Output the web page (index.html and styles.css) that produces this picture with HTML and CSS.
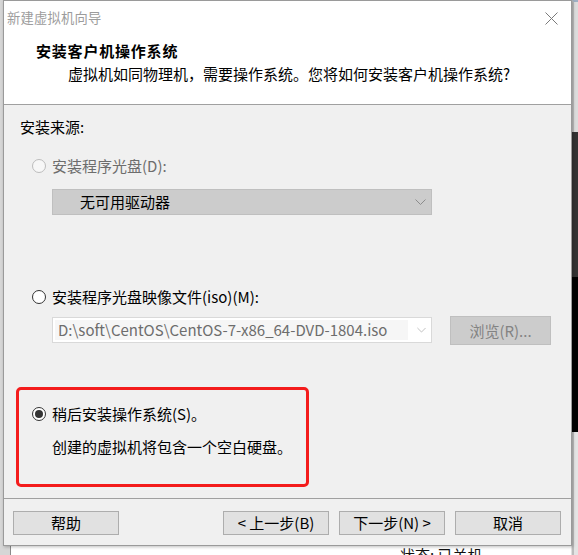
FILE: index.html
```html
<!DOCTYPE html>
<html lang="zh-CN">
<head>
<meta charset="utf-8">
<title>新建虚拟机向导</title>
<link rel="stylesheet" href="styles.css">
</head>
<body>
<div class="desktop">
  <div class="bg-left"></div>
  <div class="bg-right">
    <div class="seg seg-light"></div>
    <div class="seg seg-dark"></div>
    <div class="seg seg-black"></div>
    <div class="seg seg-light2"></div>
  </div>
  <div class="bg-bottom"><span class="status">状态: 已关机</span></div>

  <div class="dialog">
    <div class="titlebar">
      <span class="title">新建虚拟机向导</span>
      <svg class="close" width="13" height="13" viewBox="0 0 13 13"><path d="M0.5 0.5 L12.5 12.5 M12.5 0.5 L0.5 12.5" stroke="#7a7a7a" stroke-width="1" fill="none"/></svg>
    </div>
    <div class="header">
      <div class="h-title">安装客户机操作系统</div>
      <div class="h-sub">虚拟机如同物理机，需要操作系统。您将如何安装客户机操作系统?</div>
    </div>
    <div class="content">
      <div class="section-label">安装来源:</div>
      <div class="radio-row row-disc is-disabled"><span class="radio"></span><span>安装程序光盘(D):</span></div>
      <div class="combo combo-disabled">
        <span class="combo-text">无可用驱动器</span>
        <svg class="chev" width="11" height="6" viewBox="0 0 11 6"><path d="M0.5 0.5 L5.5 5.5 L10.5 0.5" stroke="#8c8c8c" stroke-width="1" fill="none"/></svg>
      </div>
      <div class="radio-row row-iso"><span class="radio"></span><span>安装程序光盘映像文件(iso)(M):</span></div>
      <div class="iso-row">
        <div class="combo combo-iso">
          <span class="edit">D:\soft\CentOS\CentOS-7-x86_64-DVD-1804.iso</span>
          <svg class="chev" width="11" height="6" viewBox="0 0 11 6"><path d="M0.5 0.5 L5.5 5.5 L10.5 0.5" stroke="#b4b4b4" stroke-width="1" fill="none"/></svg>
        </div>
        <div class="browse">浏览(R)...</div>
      </div>
      <div class="later-box">
        <div class="radio-row"><span class="radio checked"></span><span>稍后安装操作系统(S)。</span></div>
        <div class="later-desc">创建的虚拟机将包含一个空白硬盘。</div>
      </div>
    </div>
    <div class="footer">
      <div class="btn">帮助</div>
      <div class="spacer"></div>
      <div class="btn">&lt; 上一步(B)</div>
      <div class="btn">下一步(N) &gt;</div>
      <div class="btn">取消</div>
    </div>
  </div>
</div>
</body>
</html>
```
FILE: styles.css
```css
* { box-sizing: border-box; }
html, body { margin: 0; padding: 0; }
body {
  width: 578px;
  height: 555px;
  overflow: hidden;
  background: #ffffff;
  font-family: "Noto Sans CJK SC", "Noto Sans", sans-serif;
  font-size: 15px;
  color: #000;
}
.desktop {
  position: relative;
  width: 578px;
  height: 555px;
  overflow: hidden;
  background: #ffffff;
}
.bg-left {
  position: absolute;
  left: 0; top: 0;
  width: 11px; height: 555px;
  background: #d6d6d6;
  border-right: 1px solid #8a8a8a;
}
.bg-right {
  position: absolute;
  left: 572px; top: 0;
  width: 6px; height: 555px;
  display: flex;
  flex-direction: column;
}
.seg { width: 100%; }
.seg-light { height: 132px; background: #dcdcdc; border-left: 2px solid #bdbdbd; border-top: 2px solid #9fb0c4; }
.seg-dark { height: 145px; background: #333333; }
.seg-black { height: 155px; background: #000000; }
.seg-light2 { flex: 1; background: #e4e4e4; border-left: 2px solid #bdbdbd; }
.bg-bottom {
  position: absolute;
  left: 12px; top: 546px;
  width: 560px; height: 9px;
  background: #ffffff;
  border-right: 1px solid #e0e0e0;
}
.status {
  position: absolute;
  left: 388px; top: -1px;
  font-size: 15px;
  line-height: 20px;
  color: #111;
}

.dialog {
  position: absolute;
  left: 3px; top: 0;
  width: 569px;
  height: 546px;
  border: 1px solid #9a9a9a;
  background: #f0f0f0;
  display: flex;
  flex-direction: column;
  box-shadow: 1px 1px 3px rgba(0,0,0,0.25);
}
.titlebar {
  height: 33px;
  background: #ffffff;
  display: flex;
  align-items: center;
  padding-left: 3px;
  padding-right: 13px;
}
.title {
  font-size: 13.3px;
  letter-spacing: 0.2px;
  color: #9c9c9c;
  line-height: 33px;
  flex: 1;
}
.close { display: block; margin-top: 2px; }

.header {
  height: 71px;
  background: #ffffff;
  border-bottom: 1px solid #a0a0a0;
  padding-top: 7px;
}
.h-title {
  padding-left: 32px;
  font-weight: bold;
  font-size: 15px;
  letter-spacing: 0.8px;
  line-height: 20px;
}
.h-sub {
  margin-top: 3px;
  padding-left: 64px;
  line-height: 20px;
}

.content {
  height: 394px;
  border-bottom: 1px solid #a0a0a0;
  padding-top: 12px;
  display: flex;
  flex-direction: column;
  align-items: flex-start;
}
.section-label {
  padding-left: 16px;
  line-height: 20px;
}
.radio-row {
  display: flex;
  align-items: center;
  gap: 6px;
  line-height: 20px;
}
.row-disc { margin-top: 19px; margin-left: 28px; }
.row-iso { margin-top: 72px; margin-left: 28px; }
.is-disabled { color: #6d6d6d; }
.radio {
  width: 14px;
  height: 14px;
  border-radius: 50%;
  border: 1px solid #333333;
  background: #ffffff;
  display: flex;
  align-items: center;
  justify-content: center;
  flex: none;
}
.is-disabled .radio { border-color: #bcbcbc; background: #f7f7f7; }
.radio.checked::after {
  content: "";
  width: 8px;
  height: 8px;
  border-radius: 50%;
  background: #333333;
}

.combo {
  display: flex;
  align-items: center;
  width: 380px;
  height: 26px;
}
.combo-disabled {
  margin-top: 13px;
  margin-left: 48px;
  background: #cccccc;
  border: 1px solid #bfbfbf;
  padding-left: 27px;
}
.combo-text { flex: 1; color: #000; line-height: 20px; }
.chev { display: block; margin-right: 5px; }

.iso-row {
  margin-top: 9px;
  margin-left: 48px;
  display: flex;
  align-items: flex-start;
}
.combo-iso {
  margin-top: 1px;
  background: #ffffff;
  border: 1px solid #d9d9d9;
  padding: 2px 0 2px 2px;
}
.edit {
  flex: none;
  width: 353px;
  height: 20px;
  line-height: 20px;
  background: #f6f6f6;
  color: #6d6d6d;
  padding-left: 3px;
  white-space: nowrap;
  overflow: hidden;
}
.combo-iso .chev { margin-left: 9px; }
.browse {
  margin-left: 18px;
  width: 101px;
  height: 29px;
  background: #cccccc;
  border: 1px solid #bfbfbf;
  color: #838383;
  display: flex;
  align-items: center;
  justify-content: center;
}

.later-box {
  margin-top: 42px;
  margin-left: 12px;
  width: 293px;
  height: 100px;
  border: 3px solid #f41c1c;
  border-radius: 5px;
  padding-top: 14px;
  padding-left: 13px;
}
.later-desc {
  margin-top: 13px;
  padding-left: 20px;
  line-height: 20px;
}

.footer {
  flex: 1;
  display: flex;
  align-items: flex-start;
  padding: 12px 10px 0 9px;
  gap: 10px;
}
.spacer { flex: 1; }
.btn {
  width: 106px;
  height: 24px;
  background: #e1e1e1;
  border: 1px solid #adadad;
  display: flex;
  align-items: center;
  justify-content: center;
  line-height: 20px;
}
```
